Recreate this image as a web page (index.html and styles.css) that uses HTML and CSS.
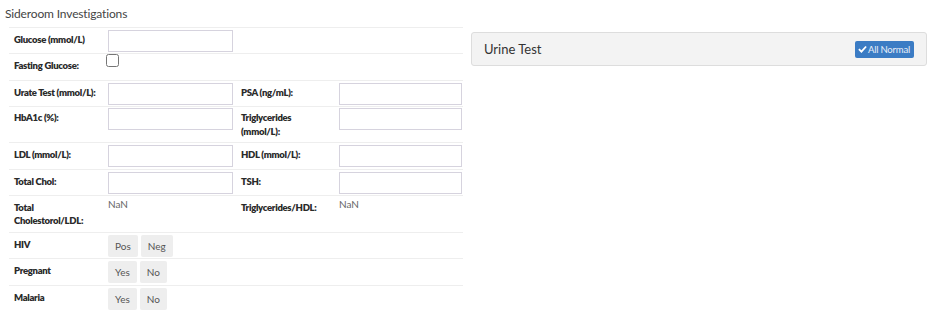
FILE: index.html
```html
<!DOCTYPE html>
<html>
<head>
<meta charset="utf-8">
<link rel="stylesheet" href="styles.css">
</head>
<body>
<div class="page">
  <div class="left">
    <div class="title">Sideroom Investigations</div>
    <div class="form">
      <div class="row">
        <div class="lbl">Glucose (mmol/L)</div>
        <div class="ctl"><input class="txt" type="text"></div>
        <div class="lbl"></div>
        <div class="ctl"></div>
      </div>
      <div class="row">
        <div class="lbl">Fasting Glucose:</div>
        <div class="ctl ctl-cb"><input class="cb" type="checkbox"></div>
        <div class="lbl"></div>
        <div class="ctl"></div>
      </div>
      <div class="row">
        <div class="lbl">Urate Test (mmol/L):</div>
        <div class="ctl"><input class="txt" type="text"></div>
        <div class="lbl">PSA (ng/mL):</div>
        <div class="ctl"><input class="txt txt2" type="text"></div>
      </div>
      <div class="row row-tall">
        <div class="lbl lbl-tall">HbA1c (%):</div>
        <div class="ctl ctl-tall"><input class="txt" type="text"></div>
        <div class="lbl lbl-tall">Triglycerides<br>(mmol/L):</div>
        <div class="ctl ctl-tall"><input class="txt txt2" type="text"></div>
      </div>
      <div class="row">
        <div class="lbl">LDL (mmol/L):</div>
        <div class="ctl"><input class="txt" type="text"></div>
        <div class="lbl">HDL (mmol/L):</div>
        <div class="ctl"><input class="txt txt2" type="text"></div>
      </div>
      <div class="row">
        <div class="lbl">Total Chol:</div>
        <div class="ctl"><input class="txt" type="text"></div>
        <div class="lbl">TSH:</div>
        <div class="ctl"><input class="txt txt2" type="text"></div>
      </div>
      <div class="row row-tall2">
        <div class="lbl">Total<br>Cholestorol/LDL:</div>
        <div class="ctl val">NaN</div>
        <div class="lbl">Triglycerides/HDL:</div>
        <div class="ctl val">NaN</div>
      </div>
      <div class="row">
        <div class="lbl">HIV</div>
        <div class="ctl btns"><button class="btn">Pos</button><button class="btn">Neg</button></div>
        <div class="lbl"></div>
        <div class="ctl"></div>
      </div>
      <div class="row">
        <div class="lbl">Pregnant</div>
        <div class="ctl btns"><button class="btn">Yes</button><button class="btn">No</button></div>
        <div class="lbl"></div>
        <div class="ctl"></div>
      </div>
      <div class="row">
        <div class="lbl">Malaria</div>
        <div class="ctl btns"><button class="btn">Yes</button><button class="btn">No</button></div>
        <div class="lbl"></div>
        <div class="ctl"></div>
      </div>
    </div>
  </div>
  <div class="right">
    <div class="panel">
      <span class="panel-title">Urine Test</span>
      <button class="btn-primary"><svg class="check" viewBox="0 0 10 8" width="9" height="8"><path d="M1 4.2 L3.8 7 L9 1.2" fill="none" stroke="#fff" stroke-width="2"/></svg>All Normal</button>
    </div>
  </div>
</div>
</body>
</html>
```

FILE: styles.css
```css
* { box-sizing: border-box; }
body {
  margin: 0;
  font-family: Lato, "Liberation Sans", sans-serif;
  color: #333;
  background: #fff;
}
.page {
  display: flex;
  align-items: flex-start;
}
.left {
  width: 469px;
  padding: 5px 0 0 5px;
}
.title {
  font-size: 12px;
  letter-spacing: -0.15px;
  line-height: 18px;
  color: #444;
  margin-bottom: 4px;
}
.form {
  margin-left: 4px;
  width: 454px;
}
.row {
  display: grid;
  grid-template-columns: 94px 133px 98px 129px;
  border-top: 1px solid #eee;
  height: 26.4px;
}
.row-tall { height: 36px; }
.row-tall2 { height: 37px; }
.lbl {
  padding: 5px 5px 0;
  font-size: 9.5px;
  letter-spacing: -0.3px;
  font-weight: 800;
  line-height: 13.5px;
  color: #2a2a2a;
  white-space: nowrap;
}
.lbl-tall { padding-top: 4px; }
.ctl {
  padding: 2px 5px 0;
}
.ctl-tall { padding-top: 1px; }
.ctl-cb { padding: 0 3px; }
.txt {
  display: block;
  width: 125px;
  height: 22px;
  border: 1px solid #d6d3de;
  border-radius: 0;
  padding: 2px 4px;
  font: inherit;
  background: #fff;
}
.txt2 { width: 123px; }
.cb {
  display: block;
  margin: 0;
  width: 13px;
  height: 13px;
}
.val {
  font-size: 10px;
  line-height: 13px;
  color: #666;
  padding-top: 2px;
}
.btns {
  display: flex;
  gap: 3px;
  padding-top: 2px;
}
.btn {
  height: 22px;
  border: none;
  border-radius: 2px;
  background: #eee;
  color: #555;
  font-family: inherit;
  font-size: 10px;
  padding: 0 7px;
}
.right {
  padding: 32px 0 0 2px;
}
.panel {
  width: 456px;
  height: 34px;
  background: #f3f3f3;
  border: 1px solid #ddd;
  border-radius: 3px;
  display: flex;
  align-items: center;
  justify-content: space-between;
  padding: 0 12px 0 12px;
}
.panel-title {
  font-size: 13px;
  color: #333;
}
.btn-primary {
  height: 17px;
  border: none;
  border-radius: 2px;
  background: #3b7cc4;
  color: #e8eef8;
  font-family: inherit;
  font-size: 9.5px;
  letter-spacing: -0.2px;
  padding: 0 4px 0 3px;
  display: flex;
  align-items: center;
}
.check { margin-right: 1px; }
```
